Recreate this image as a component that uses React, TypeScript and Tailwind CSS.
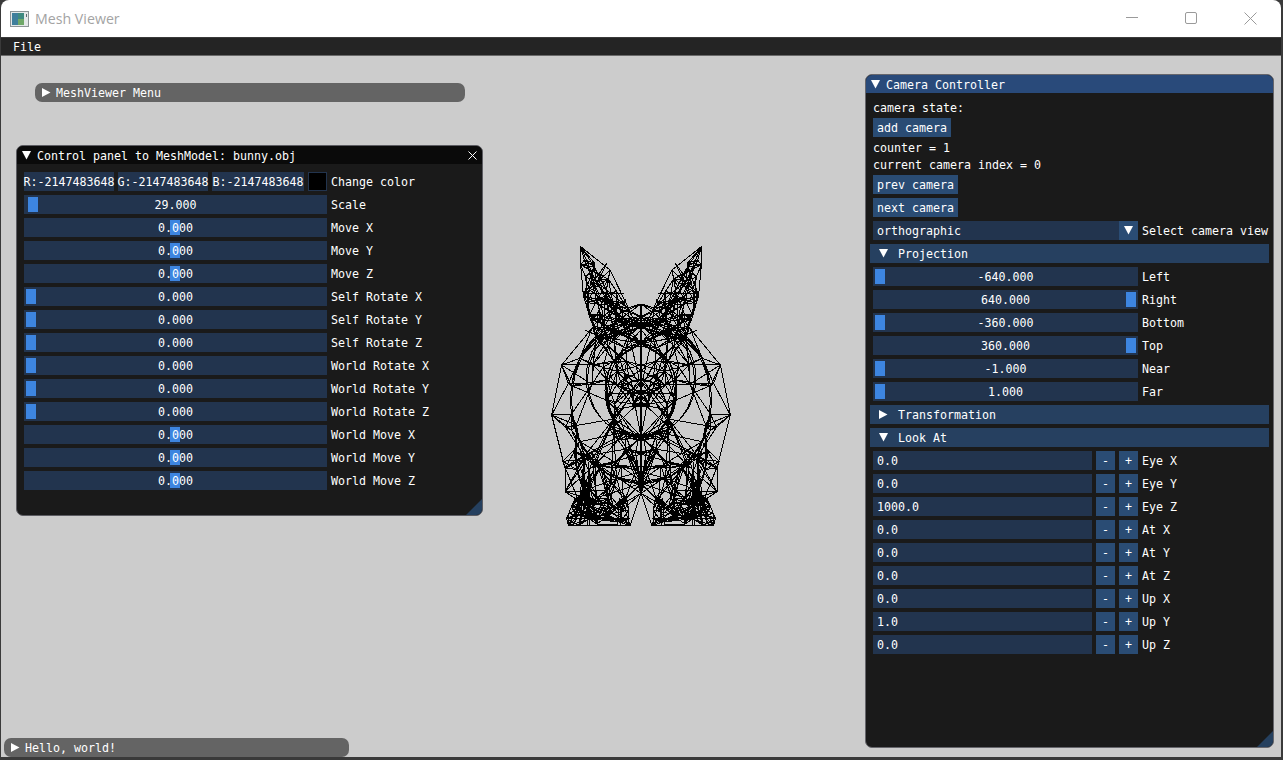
import { ReactNode } from "react";

const mono = { fontFamily: '"DejaVu Sans Mono", "Liberation Mono", monospace' };

type Pt = [number, number];

// half of the bunny, as offset from the centre line, in 3x pixels
const halfOutline: Pt[] = [
  [0, 207], [38, 218], [93, 105], [181, 35], [181, 90], [173, 180], [153, 250], [143, 275],
  [238, 390], [268, 540], [228, 700], [228, 770], [198, 790], [223, 850], [218, 872], [33, 872], [0, 775],
];

const CX = 333;
const outline: Pt[] = [
  ...halfOutline.map(([x, y]): Pt => [CX + x, y]),
  ...halfOutline.slice(1, -1).reverse().map(([x, y]): Pt => [CX - x, y]),
];

const inside = (px: number, py: number) => {
  let hit = false;
  for (let i = 0, j = outline.length - 1; i < outline.length; j = i++) {
    const [xi, yi] = outline[i];
    const [xj, yj] = outline[j];
    if (yi > py !== yj > py && px < ((xj - xi) * (py - yi)) / (yj - yi) + xi) hit = !hit;
  }
  return hit;
};

const arc = (cy: number, rx: number, ry: number, n: number): Pt[] => {
  const pts: Pt[] = [];
  for (let i = 0; i <= n; i++) {
    const t = (Math.PI * i) / n;
    pts.push([Math.sin(t) * rx, cy - Math.cos(t) * ry]);
  }
  return pts;
};

const buildMesh = () => {
  let seed = 90211;
  const rnd = () => {
    seed = (seed * 16807) % 2147483647;
    return seed / 2147483647;
  };
  const half: Pt[] = [...halfOutline, ...arc(465, 105, 140, 7), ...arc(495, 212, 250, 9)];
  const scatter = (n: number, x0: number, x1: number, y0: number, y1: number) => {
    for (let i = 0; i < n; i++) half.push([x0 + rnd() * (x1 - x0), y0 + rnd() * (y1 - y0)]);
  };
  scatter(30, 45, 178, 60, 290);
  scatter(14, 0, 150, 260, 400);
  scatter(16, 0, 100, 380, 620);
  scatter(9, 130, 250, 420, 700);
  scatter(22, 0, 210, 640, 780);
  scatter(36, 30, 222, 785, 872);

  const pts: Pt[] = [];
  const mirror: number[] = [];
  half.forEach(([x, y]) => {
    const a = pts.length;
    pts.push([CX + x, y]);
    if (x > 0) {
      pts.push([CX - x, y]);
      mirror[a] = a + 1;
      mirror[a + 1] = a;
    } else {
      mirror[a] = a;
    }
  });

  const lines: string[] = [];
  const seen = new Set<string>();
  const link = (i: number, j: number) => {
    const key = i < j ? `${i}-${j}` : `${j}-${i}`;
    if (seen.has(key)) return;
    seen.add(key);
    const p = pts[i];
    const q = pts[j];
    for (let s = 1; s < 10; s++) {
      const t = s / 10;
      if (!inside(p[0] + (q[0] - p[0]) * t, p[1] + (q[1] - p[1]) * t)) return;
    }
    lines.push(`M${p[0].toFixed(0)} ${p[1].toFixed(0)}L${q[0].toFixed(0)} ${q[1].toFixed(0)}`);
  };
  pts.forEach((p, i) => {
    if (p[0] < CX) return;
    const byDist = pts
      .map((q, j) => ({ j, d: Math.hypot(q[0] - p[0], q[1] - p[1]) }))
      .filter((o) => o.j !== i)
      .sort((a, b) => a.d - b.d);
    byDist.slice(0, 4).forEach(({ j }) => {
      link(i, j);
      link(mirror[i], mirror[j]);
    });
    // long thin triangles across the mesh
    const far = byDist.filter((o) => o.d > 60 && o.d < 150);
    for (let k = 0; k < 2 && far.length; k++) {
      const j = far[Math.floor(rnd() * far.length)].j;
      link(i, j);
      link(mirror[i], mirror[j]);
    }
  });

  // dark arcs and bands, drawn on both sides
  const poly = (half: Pt[]) => {
    const side = (k: number) =>
      "M" + half.map(([x, y]) => `${(CX + k * x).toFixed(0)} ${y.toFixed(0)}`).join("L");
    return side(1) + side(-1);
  };
  const heavy = [
    arc(465, 105, 140, 16), arc(467, 108, 138, 16), arc(470, 100, 136, 16),
    arc(495, 212, 250, 20), arc(498, 208, 248, 20), arc(430, 165, 175, 18), arc(434, 160, 172, 18),
    [[158, 100], [140, 170], [110, 280]] as Pt[],
    [[152, 100], [132, 180], [118, 280]] as Pt[],
    [[158, 680], [160, 872]] as Pt[], [[153, 700], [155, 872]] as Pt[],
    [[65, 790], [70, 872]] as Pt[], [[60, 800], [62, 872]] as Pt[],
    [[-1, 207], [0, 775]] as Pt[],
    [[0, 265], [60, 285], [150, 350]] as Pt[],
    [[0, 740], [90, 725], [160, 670]] as Pt[],
    [[33, 850], [223, 850]] as Pt[],
    [[0, 605], [70, 590], [105, 555]] as Pt[],
    [[50, 175], [173, 175]] as Pt[],
    [[0, 475], [100, 475]] as Pt[],
  ].map(poly);

  return {
    wire: lines.join(""),
    heavy: heavy.join(""),
    shape: "M" + outline.map(([x, y]) => `${x} ${y}`).join("L") + "Z",
  };
};

const mesh = buildMesh();

const T = ({ children }: { children: ReactNode }) => (
  <span className="relative top-px whitespace-nowrap">{children}</span>
);

const Tri = ({ open }: { open?: boolean }) => (
  <svg width="9" height="9" viewBox="0 0 9 9" className="flex-none">
    <polygon points={open ? "0,0 9,0 4.5,8.5" : "0,0 8.5,4.5 0,9"} fill="#fff" />
  </svg>
);

const Slider = ({ value, label, grab, width }: { value: string; label: string; grab: number; width: number }) => (
  <div className="flex h-[19px] flex-none items-center">
    <div className="relative flex h-full flex-none items-center justify-center bg-[#22344e]" style={{ width }}>
      <div className="absolute top-[2px] h-[15px] w-[10px] bg-[#3d85e0]" style={{ left: grab }} />
      <T>{value}</T>
    </div>
    <div className="ml-1">
      <T>{label}</T>
    </div>
  </div>
);

const Btn = ({ children }: { children: ReactNode }) => (
  <div className="flex h-[19px] w-fit flex-none items-center bg-[#2a4c74] px-1">
    <T>{children}</T>
  </div>
);

const Header = ({ open, children }: { open?: boolean; children: ReactNode }) => (
  <div className="-mx-[3px] flex h-[19px] flex-none items-center bg-[#264060] pl-[9px]">
    <Tri open={open} />
    <div className="ml-[10px]">
      <T>{children}</T>
    </div>
  </div>
);

const Stepper = ({ value, label }: { value: string; label: string }) => (
  <div className="flex h-[19px] flex-none items-center">
    <div className="flex h-full w-[219px] flex-none items-center bg-[#22344e] pl-1">
      <T>{value}</T>
    </div>
    <div className="ml-1 flex h-full w-[19px] flex-none items-center justify-center bg-[#2a4c74]">
      <T>-</T>
    </div>
    <div className="ml-1 flex h-full w-[19px] flex-none items-center justify-center bg-[#2a4c74]">
      <T>+</T>
    </div>
    <div className="ml-1">
      <T>{label}</T>
    </div>
  </div>
);

const Grip = () => (
  <svg width="16" height="16" viewBox="0 0 16 16" className="absolute right-0 bottom-0">
    <polygon points="16,0 16,16 0,16" fill="#25405f" />
  </svg>
);

const Collapsed = ({ className, children }: { className: string; children: ReactNode }) => (
  <div className={`absolute flex h-[19px] items-center rounded-[7px] bg-[#646464] pl-[7px] ${className}`}>
    <Tri />
    <div className="ml-[5px]">
      <T>{children}</T>
    </div>
  </div>
);

const leftRows: [string, string, number][] = [
  ["29.000", "Scale", 4],
  ["0.000", "Move X", 146],
  ["0.000", "Move Y", 146],
  ["0.000", "Move Z", 146],
  ["0.000", "Self Rotate X", 2],
  ["0.000", "Self Rotate Y", 2],
  ["0.000", "Self Rotate Z", 2],
  ["0.000", "World Rotate X", 2],
  ["0.000", "World Rotate Y", 2],
  ["0.000", "World Rotate Z", 2],
  ["0.000", "World Move X", 146],
  ["0.000", "World Move Y", 146],
  ["0.000", "World Move Z", 146],
];

const projection: [string, string, number][] = [
  ["-640.000", "Left", 2],
  ["640.000", "Right", 253],
  ["-360.000", "Bottom", 2],
  ["360.000", "Top", 253],
  ["-1.000", "Near", 2],
  ["1.000", "Far", 2],
];

const lookAt: [string, string][] = [
  ["0.0", "Eye X"],
  ["0.0", "Eye Y"],
  ["1000.0", "Eye Z"],
  ["0.0", "At X"],
  ["0.0", "At Y"],
  ["0.0", "At Z"],
  ["0.0", "Up X"],
  ["1.0", "Up Y"],
  ["0.0", "Up Z"],
];

export default function App() {
  return (
    <div className="h-[760px] w-[1283px] overflow-hidden bg-[#3a3a3a] pr-[2px] pb-[3px] pl-[1px]">
      <div className="flex h-full flex-col overflow-hidden rounded-t-[8px]">
        {/* native title bar */}
        <div className="flex h-[37px] flex-none items-center bg-white pl-[9px]">
          <svg width="19" height="16" viewBox="0 0 19 16" className="flex-none">
            <rect x="0.5" y="0.5" width="18" height="15" fill="#e4e8e8" stroke="#8c9496" />
            <rect x="2" y="2" width="12" height="12" fill="#3f8a80" />
            <rect x="2" y="2" width="6" height="12" fill="#3f7f9c" />
            <rect x="8" y="8" width="6" height="6" fill="#6fa868" />
            <rect x="16" y="3" width="1" height="3" fill="#5e6a6c" />
          </svg>
          <span className="ml-[6px] text-[14.2px] text-[#a3a3a3]" style={{ fontFamily: '"Open Sans", sans-serif' }}>
            Mesh Viewer
          </span>
          <div className="ml-auto flex items-center pr-[23px]">
            <svg width="13" height="13" viewBox="0 0 13 13" stroke="#9a9a9a" fill="none">
              <path d="M0 5.5H12" />
            </svg>
            <svg width="13" height="13" viewBox="0 0 13 13" stroke="#9a9a9a" fill="none" className="ml-[46px]">
              <rect x="0.5" y="0.5" width="11" height="11" rx="1.5" />
            </svg>
            <svg width="14" height="14" viewBox="0 0 14 14" stroke="#9a9a9a" fill="none" className="ml-[46px]">
              <path d="M0.5 0.5L12.5 12.5M12.5 0.5L0.5 12.5" />
            </svg>
          </div>
        </div>
        <div className="h-px flex-none bg-[#3a3a3a]" />

        {/* menu bar */}
        <div className="flex h-[17px] flex-none items-center bg-[#242424] pl-3 text-[11.63px] text-white" style={mono}>
          <T>File</T>
        </div>
        <div className="h-px flex-none bg-[#6a6a6a]" />

        {/* viewport */}
        <div className="relative flex-1 bg-[#cccccc] text-[11.63px] leading-[13px] text-white" style={mono}>
          <Collapsed className="top-[27px] left-[34px] w-[430px]">MeshViewer Menu</Collapsed>
          <Collapsed className="top-[682px] left-[3px] w-[345px]">Hello, world!</Collapsed>

          <svg width="220" height="300" viewBox="0 0 660 900" className="absolute top-[179px] left-[529px]" fill="none" stroke="#000">
            <path d={mesh.wire} strokeWidth="1" vectorEffect="non-scaling-stroke" shapeRendering="crispEdges" />
            <path d={mesh.heavy} strokeWidth="1" vectorEffect="non-scaling-stroke" shapeRendering="crispEdges" />
            <path d={mesh.shape} strokeWidth="1" vectorEffect="non-scaling-stroke" shapeRendering="crispEdges" />
          </svg>

          {/* mesh model panel */}
          <div className="absolute top-[89px] left-[15px] flex h-[371px] w-[467px] flex-col overflow-hidden rounded-[7px] border border-[#5c5c62] bg-[#1a1a1a]">
            <div className="flex h-[18px] flex-none items-center bg-[#0a0a0a] pl-[5px]">
              <Tri open />
              <div className="ml-[6px]">
                <T>Control panel to MeshModel: bunny.obj</T>
              </div>
              <svg width="9" height="9" viewBox="0 0 9 9" stroke="#fff" fill="none" className="mr-[5px] ml-auto">
                <path d="M0.5 0.5L8.5 8.5M8.5 0.5L0.5 8.5" />
              </svg>
            </div>
            <div className="flex flex-col gap-1 pt-2 pl-[7px]">
              <div className="flex h-[19px] flex-none items-center">
                <div className="flex h-full w-[90px] flex-none items-center justify-center bg-[#22344e]"><T>R:-2147483648</T></div>
                <div className="ml-1 flex h-full w-[90px] flex-none items-center justify-center bg-[#22344e]"><T>G:-2147483648</T></div>
                <div className="ml-1 flex h-full w-[92px] flex-none items-center justify-center bg-[#22344e]"><T>B:-2147483648</T></div>
                <div className="ml-1 h-full w-[19px] flex-none border border-[#22344e] bg-black" />
                <div className="ml-1">
                  <T>Change color</T>
                </div>
              </div>
              {leftRows.map(([value, label, grab]) => (
                <Slider key={label} value={value} label={label} grab={grab} width={303} />
              ))}
            </div>
            <Grip />
          </div>

          {/* camera panel */}
          <div className="absolute top-[18px] left-[864px] flex h-[674px] w-[409px] flex-col overflow-hidden rounded-[7px] border border-[#66666c] bg-[#1a1a1a]">
            <div className="flex h-[18px] flex-none items-center bg-[#294a7a] pl-[5px]">
              <Tri open />
              <div className="ml-[6px]">
                <T>Camera Controller</T>
              </div>
            </div>
            <div className="flex flex-col gap-1 pt-2 pr-[7px] pl-[7px]">
              <div className="h-[13px] flex-none"><T>camera state:</T></div>
              <Btn>add camera</Btn>
              <div className="h-[13px] flex-none"><T>counter = 1</T></div>
              <div className="h-[13px] flex-none"><T>current camera index = 0</T></div>
              <Btn>prev camera</Btn>
              <Btn>next camera</Btn>
              <div className="flex h-[19px] flex-none items-center">
                <div className="flex h-full w-[246px] flex-none items-center bg-[#22344e] pl-1">
                  <T>orthographic</T>
                </div>
                <div className="flex h-full w-[19px] flex-none items-center justify-center bg-[#2a4c74]">
                  <Tri open />
                </div>
                <div className="ml-1">
                  <T>Select camera view</T>
                </div>
              </div>
              <Header open>Projection</Header>
              {projection.map(([value, label, grab]) => (
                <Slider key={label} value={value} label={label} grab={grab} width={265} />
              ))}
              <Header>Transformation</Header>
              <Header open>Look At</Header>
              {lookAt.map(([value, label]) => (
                <Stepper key={label} value={value} label={label} />
              ))}
            </div>
            <Grip />
          </div>
        </div>
      </div>
    </div>
  );
}
